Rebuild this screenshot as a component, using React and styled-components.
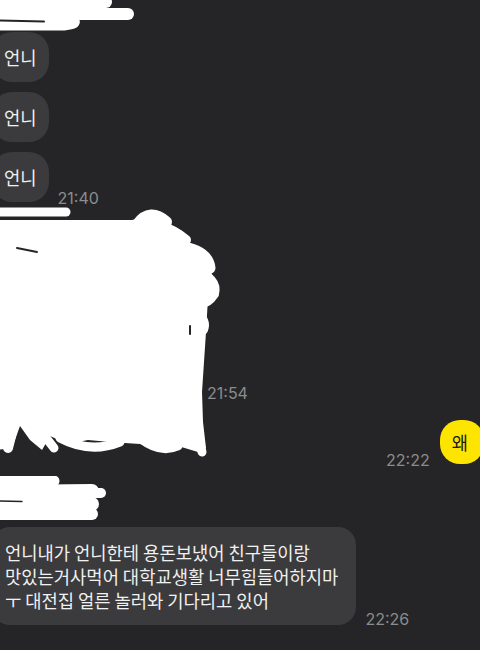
import React from 'react';
import styled, { createGlobalStyle } from 'styled-components';

const GlobalStyle = createGlobalStyle`
  html, body {
    margin: 0;
    padding: 0;
    background: #252527;
    overflow: hidden;
  }
`;

const Screen = styled.div`
  width: 480px;
  height: 650px;
  overflow: hidden;
  display: flex;
  flex-direction: column;
  background: #252527;
  font-family: 'Noto Sans CJK KR', 'Noto Sans', sans-serif;
`;

const Row = styled.div`
  display: flex;
  align-items: flex-end;
  justify-content: ${props => (props.mine ? 'flex-end' : 'flex-start')};
  margin-top: ${props => props.top || 0}px;
`;

const Bubble = styled.div`
  box-sizing: border-box;
  background: ${props => (props.mine ? '#fee500' : '#3b3b3d')};
  color: ${props => (props.mine ? '#1a1a1a' : '#f1f1f1')};
  font-size: 17.7px;
  line-height: 24px;
  padding: ${props =>
    props.mine ? '10px 16px 10px 12px' : props.big ? '13px 18px 13px 13px' : '13px 12px 13px 12px'};
  margin-left: ${props => (props.mine ? 0 : -8)}px;
  margin-right: ${props => (props.mine ? -4 : 0)}px;
  border-radius: ${props => (props.big ? 18 : 20)}px;
  white-space: nowrap;
`;

const HiddenBubble = styled.div`
  margin-left: -8px;
  width: 206px;
  height: 152px;
  border-radius: 18px;
  background: #3b3b3d;
`;

const Time = styled.span`
  order: ${props => (props.mine ? -1 : 0)};
  margin: 0 10px ${props => (props.big ? -2 : -4)}px 9px;
  margin-left: ${props => (props.mine ? 0 : 9)}px;
  font-family: Inter, 'Noto Sans', sans-serif;
  font-size: 16px;
  line-height: 16px;
  color: #8c8c8e;
`;

const Redacted = styled.div`
  position: relative;
  padding-top: 43px;
`;

const ScribbleLayer = styled.svg`
  position: absolute;
  left: 0;
  top: 0;
  pointer-events: none;
`;

const NameScribble = styled.svg`
  display: block;
  flex-shrink: 0;
  margin-top: ${props => props.top || 0}px;
`;

const TopScribble = () => (
  <NameScribble width="140" height="32" viewBox="0 0 140 32">
    <g stroke="#fff" strokeLinecap="round" fill="none">
      <path d="M-6,2 L106,2" strokeWidth="12" />
      <path d="M-6,14 L128,14" strokeWidth="12" />
      <path d="M-6,25 L64,25 Q76,24 74,21" strokeWidth="11" />
    </g>
    <path d="M-2,20.5 L44,21.5" stroke="#252527" strokeWidth="2" strokeLinecap="round" />
  </NameScribble>
);

const SenderScribble = () => (
  <NameScribble top={12} width="112" height="46" viewBox="0 0 112 46">
    <g stroke="#fff" strokeLinecap="round" fill="none">
      <path d="M-6,5 L54,5" strokeWidth="11" />
      <path d="M-6,16 L92,15" strokeWidth="14" />
      <path d="M84,17 L101,17" strokeWidth="10" />
      <path d="M-6,28 L92,28" strokeWidth="14" />
      <path d="M-6,38 L92,38" strokeWidth="12" />
    </g>
    <path d="M-2,25 L22,25.5" stroke="#252527" strokeWidth="1.5" strokeLinecap="round" />
  </NameScribble>
);

const BigScribble = () => (
  <ScribbleLayer width="230" height="256" viewBox="0 0 230 256">
    <path
      fill="#fff"
      d="M-4,18 L60,18 L132,18 L150,14 L168,22 L178,32 L192,44 L204,58 L212,72 L214,84 L208,96 L206,130 L204,160 L202,190 L203,220 L206,246 L198,250 L178,244 L160,250 L140,242 L110,240 L88,238 L68,242 L50,234 L42,248 L30,238 L20,224 L12,246 L-4,248 Z"
    />
    <g stroke="#fff" strokeLinecap="round" fill="none">
      <path d="M-4,10 L66,10" strokeWidth="9" />
      <path d="M138,22 Q150,6 166,20" strokeWidth="12" />
      <path d="M160,24 Q175,28 186,38" strokeWidth="10" />
      <path d="M178,44 Q208,48 210,66" strokeWidth="11" />
      <path d="M192,68 Q218,76 214,92 Q206,104 196,100" strokeWidth="10" />
      <path d="M196,110 Q208,118 204,128" strokeWidth="8" />
      <path d="M14,222 L8,246" strokeWidth="10" />
      <path d="M40,228 L54,246" strokeWidth="9" />
      <path d="M60,236 Q90,252 120,240" strokeWidth="9" />
      <path d="M140,236 Q160,252 178,244" strokeWidth="9" />
      <path d="M196,224 L202,250" strokeWidth="9" />
    </g>
    <g stroke="#252527" strokeLinecap="round" fill="none">
      <path d="M17,46 L37,50" strokeWidth="2" />
      <path d="M190,124 L190,132" strokeWidth="2" />
    </g>
  </ScribbleLayer>
);

export default function App() {
  return (
    <>
      <GlobalStyle />
      <Screen>
        <TopScribble />
        <Row>
          <Bubble>언니</Bubble>
        </Row>
        <Row top={10}>
          <Bubble>언니</Bubble>
        </Row>
        <Row top={10}>
          <Bubble>언니</Bubble>
          <Time>21:40</Time>
        </Row>
        <Redacted>
          <Row>
            <HiddenBubble />
            <Time>21:54</Time>
          </Row>
          <BigScribble />
        </Redacted>
        <Row mine top={23}>
          <Bubble mine>왜</Bubble>
          <Time mine>22:22</Time>
        </Row>
        <SenderScribble />
        <Row top={5}>
          <Bubble big>
            언니내가 언니한테 용돈보냈어 친구들이랑
            <br />
            맛있는거사먹어 대학교생활 너무힘들어하지마
            <br />
            ㅜ 대전집 얼른 놀러와 기다리고 있어
          </Bubble>
          <Time big>22:26</Time>
        </Row>
      </Screen>
    </>
  );
}
